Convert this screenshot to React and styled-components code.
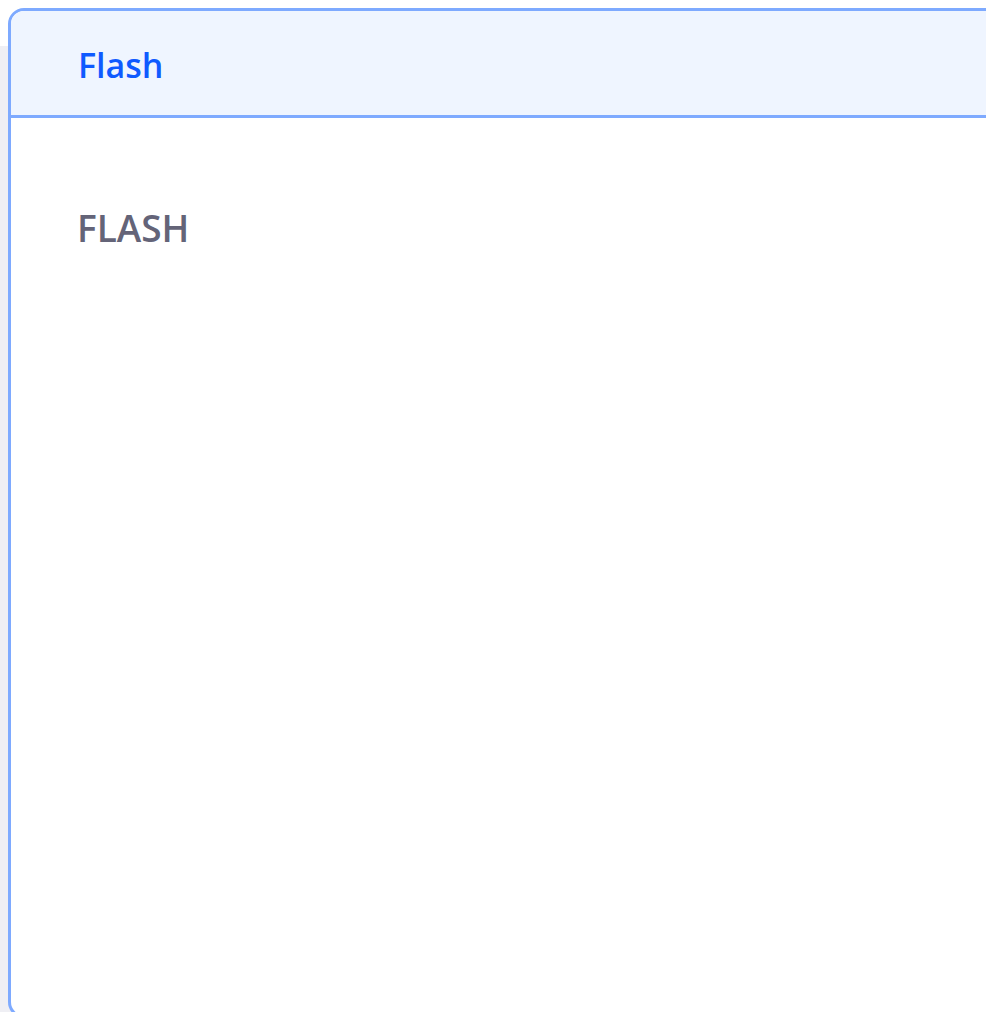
import React from "react";
import styled, { createGlobalStyle } from "styled-components";

const GlobalStyle = createGlobalStyle`
  html, body {
    margin: 0;
    padding: 0;
    overflow: hidden;
    height: 100%;
  }
  body {
    background: linear-gradient(#ffffff 0 46px, #efeff4 46px);
    font-family: "Open Sans", "Noto Sans", sans-serif;
  }
`;

const Page = styled.div`
  padding: 8px 0 0 8px;
  width: 1200px;
`;

const Card = styled.section`
  box-sizing: border-box;
  width: 1100px;
  height: 1010px;
  border: 3px solid #7eaaff;
  border-radius: 16px;
  background: #ffffff;
  overflow: hidden;
  display: flex;
  flex-direction: column;
`;

const Header = styled.header`
  box-sizing: border-box;
  flex: none;
  height: 107px;
  display: flex;
  align-items: center;
  padding: 4px 0 0 67px;
  background: #eff5ff;
  border-bottom: 3px solid #7eaaff;
`;

const Title = styled.h1`
  margin: 0;
  font-size: 34px;
  font-weight: 600;
  line-height: 1;
  color: #0f5aff;
`;

const Body = styled.div`
  padding: 91px 0 0 66px;
`;

const Label = styled.h2`
  margin: 0;
  font-size: 37px;
  font-weight: 600;
  line-height: 1;
  color: #646478;
`;

export default function App() {
  return (
    <>
      <GlobalStyle />
      <Page>
        <Card>
          <Header>
            <Title>Flash</Title>
          </Header>
          <Body>
            <Label>FLASH</Label>
          </Body>
        </Card>
      </Page>
    </>
  );
}
